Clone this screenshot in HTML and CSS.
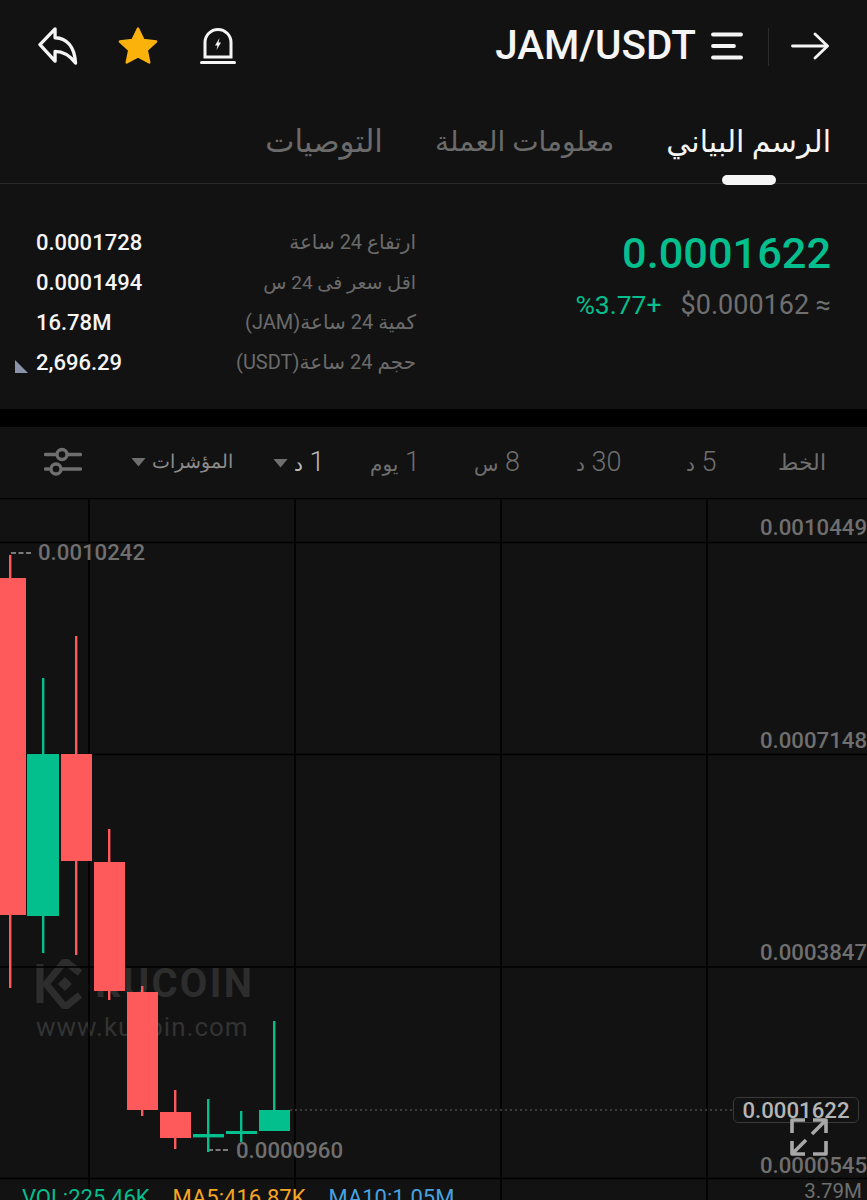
FILE: index.html
```html
<!DOCTYPE html>
<html lang="ar">
<head>
    <meta charset="UTF-8">
    <meta name="viewport" content="width=device-width, initial-scale=1.0">
    <title>JAM/USDT</title>
    <link rel="stylesheet" href="styles.css">
</head>
<body>
    <header class="top-bar">
        <div class="top-actions">
            <svg class="icon-reply" viewBox="0 0 40 40" fill="none" stroke="#f5f5f5" stroke-width="3.4" stroke-linejoin="round" stroke-linecap="round">
                <path d="M1.5 18 L17 2 L17 11 C29 11.5 37 20 38 37 C32 29 26 25 17 25 L17 35 Z"/>
            </svg>
            <svg class="icon-star" viewBox="0 0 40 40">
                <path d="M20 1.5 L25.6 13.2 L38.6 14.9 L29 23.7 L31.6 36.4 L20 30.2 L8.4 36.4 L11 23.7 L1.4 14.9 L14.4 13.2 Z" fill="#fbb20b" stroke="#fbb20b" stroke-width="2.4" stroke-linejoin="round"/>
            </svg>
            <svg class="icon-siren" viewBox="0 0 36 38" fill="none" stroke="#f5f5f5" stroke-width="3" stroke-linecap="round">
                <path d="M5 29 V14.5 A13 13 0 0 1 31 14.5 V29 Z"/>
                <path d="M1.5 34.5 H34.5"/>
                <path d="M19.5 10 L15 17.5 H17.5 L16.5 22 L21 14.5 H18.5 Z" stroke="none" fill="#f5f5f5"/>
            </svg>
        </div>
        <div class="top-pair">
            <span class="pair-name">JAM/USDT</span>
            <svg class="icon-list" viewBox="0 0 32 28" fill="none" stroke="#f5f5f5" stroke-width="3.8" stroke-linecap="round">
                <path d="M2 2.5 H30"/>
                <path d="M2 14 H23"/>
                <path d="M2 25.5 H30"/>
            </svg>
            <span class="top-divider"></span>
            <svg class="icon-arrow" viewBox="0 0 38 28" fill="none" stroke="#f5f5f5" stroke-width="2.8" stroke-linecap="round" stroke-linejoin="round">
                <path d="M1.5 14 H36"/>
                <path d="M24 2 L36.5 14 L24 26"/>
            </svg>
        </div>
    </header>

    <nav class="tabs" dir="rtl">
        <a class="tab active">الرسم البياني</a>
        <a class="tab tab-info">معلومات العملة</a>
        <a class="tab tab-recs">التوصيات</a>
    </nav>

    <section class="market">
        <div class="market-stats">
            <div class="stat-row"><span class="stat-value">0.0001728</span><span class="stat-label" dir="rtl">ارتفاع 24 ساعة</span></div>
            <div class="stat-row"><span class="stat-value">0.0001494</span><span class="stat-label tight" dir="rtl">اقل سعر فى 24 س</span></div>
            <div class="stat-row"><span class="stat-value">16.78M</span><span class="stat-label" dir="rtl">كمية 24 ساعة(JAM)</span></div>
            <div class="stat-row"><span class="stat-value">2,696.29</span><span class="stat-label" dir="rtl">حجم 24 ساعة(USDT)</span></div>
            <span class="corner-mark"></span>
        </div>
        <div class="market-price">
            <div class="price-big">0.0001622</div>
            <div class="price-sub">
                <span class="price-change">%3.77+</span>
                <span class="price-usd">$0.000162 ≈</span>
            </div>
        </div>
    </section>

    <div class="band"></div>

    <div class="periods">
        <svg class="icon-sliders" viewBox="0 0 38 30" fill="none" stroke="#6f6f6f" stroke-width="3.4" stroke-linecap="round">
            <path d="M1.5 7.5 H11"/>
            <path d="M24 7.5 H36.5"/>
            <circle cx="18" cy="7.5" r="5"/>
            <path d="M1.5 22 H5"/>
            <path d="M18 22 H36.5"/>
            <circle cx="12" cy="22" r="5"/>
        </svg>
        <div class="period-menu indicators"><span class="caret"></span><span class="period-ar">المؤشرات</span></div>
        <div class="period-menu interval"><span class="caret"></span><span class="period-on" dir="rtl">1 <span class="ar">د</span></span></div>
        <span class="period p-day" dir="rtl">1 <span class="ar">يوم</span></span>
        <span class="period p-8h" dir="rtl">8 <span class="ar">س</span></span>
        <span class="period p-30" dir="rtl">30 <span class="ar">د</span></span>
        <span class="period p-5" dir="rtl">5 <span class="ar">د</span></span>
        <span class="period p-line" dir="rtl">الخط</span>
    </div>

    <main class="chart">
        <!-- watermark sits under the candles -->
        <svg class="wm-logo" viewBox="0 0 46 50" fill="none" stroke="#2d2d2d" stroke-width="7">
            <path d="M4 5 V44"/>
            <path d="M44 14 L29 2 L10 25 L29 48 L44 36"/>
            <path d="M29 18 L36 25 L29 32 L22 25 Z" fill="#2d2d2d" stroke="none"/>
        </svg>
        <div class="wm-name">KUCOIN</div>
        <div class="wm-url">www.kucoin.com</div>

        <svg class="plot" viewBox="0 498 867 702">
            <g stroke="#000" stroke-width="1.5">
                <path d="M0 498.5 H867"/>
                <path d="M0 542.5 H867"/>
                <path d="M0 754.5 H867"/>
                <path d="M0 967 H867"/>
                <path d="M0 1178.5 H867"/>
                <path d="M89 498 V1200"/>
                <path d="M295 498 V1200"/>
                <path d="M501 498 V1200"/>
                <path d="M707 498 V1200"/>
            </g>
            <path d="M290 1110 H733" stroke="#4a4a4a" stroke-width="1.5" stroke-dasharray="2 3"/>
            <path d="M11 553 H32 M208 1150 H230" stroke="#7a7a7a" stroke-width="1.8" stroke-dasharray="5 2.5"/>
            <g fill="#fe5a5c">
                <rect x="9" y="555" width="2.4" height="433"/>
                <rect x="-1" y="578" width="27" height="337"/>
                <rect x="75" y="636" width="2.4" height="319"/>
                <rect x="61" y="754" width="31" height="107"/>
                <rect x="108" y="829" width="2.4" height="171"/>
                <rect x="94" y="862" width="31" height="129"/>
                <rect x="141" y="986" width="2.4" height="130"/>
                <rect x="127" y="992" width="31" height="118"/>
                <rect x="174" y="1090" width="2.4" height="59"/>
                <rect x="160" y="1112" width="31" height="26"/>
            </g>
            <g fill="#03bf8e">
                <rect x="42" y="678" width="2.4" height="275"/>
                <rect x="27" y="754" width="32" height="162"/>
                <rect x="207" y="1099" width="2.4" height="53"/>
                <rect x="193" y="1134" width="31" height="3.4"/>
                <rect x="240" y="1111" width="2.4" height="31"/>
                <rect x="226" y="1131" width="31" height="3"/>
                <rect x="273" y="1021" width="2.4" height="110"/>
                <rect x="259" y="1110" width="31" height="21"/>
            </g>
        </svg>

        <span class="extreme extreme-high">0.0010242</span>
        <span class="extreme extreme-low">0.0000960</span>

        <span class="axis axis-1">0.0010449</span>
        <span class="axis axis-2">0.0007148</span>
        <span class="axis axis-3">0.0003847</span>
        <span class="axis axis-4">0.0000545</span>
        <span class="axis axis-vol">3.79M</span>

        <span class="last-price">0.0001622</span>
        <svg class="icon-expand" viewBox="0 0 38 38" fill="none" stroke="#a8a8a8" stroke-width="3.6" stroke-linejoin="round">
            <path d="M15 2 H2 V15"/>
            <path d="M36 23 V36 H23"/>
            <path d="M16 22 L3 35 M2 23 V36 H15"/>
            <path d="M22 16 L35 3 M23 2 H36 V15"/>
        </svg>

        <div class="legend">
            <span class="lg-vol">VOL:225.46K</span>
            <span class="lg-ma5">MA5:416.87K</span>
            <span class="lg-ma10">MA10:1.05M</span>
        </div>
    </main>
</body>
</html>
```
FILE: styles.css
```css
* {
    margin: 0;
    padding: 0;
    box-sizing: border-box;
}

body {
    width: 867px;
    height: 1200px;
    overflow: hidden;
    background: #121212;
    color: #f5f5f5;
    font-family: Roboto, "DejaVu Sans", sans-serif;
}

.top-bar {
    height: 92px;
    display: flex;
    justify-content: space-between;
    padding: 27px 38px 0 38px;
}

.top-actions {
    display: flex;
    align-items: flex-start;
}

.icon-reply {
    width: 40px;
    height: 39px;
}

.icon-star {
    width: 40px;
    height: 39px;
    margin-left: 40px;
}

.icon-siren {
    width: 36px;
    height: 38px;
    margin-left: 42px;
    margin-top: 1px;
}

.top-pair {
    display: flex;
    align-items: flex-start;
}

.pair-name {
    font-size: 40.4px;
    font-weight: 500;
    line-height: 38px;
}

.icon-list {
    width: 32px;
    height: 28px;
    margin: 5px 0 0 15px;
}

.top-divider {
    width: 1px;
    height: 38px;
    margin: 1px 0 0 25px;
    background: #2c2c2c;
}

.icon-arrow {
    width: 38px;
    height: 28px;
    margin: 5px 0 0 22px;
}

.tabs {
    height: 92px;
    display: flex;
    gap: 52px;
    padding-right: 36px;
    border-bottom: 1px solid #2b2b2b;
}

.tab {
    position: relative;
    font-size: 30px;
    line-height: 36px;
    padding-top: 32px;
    color: #6b6b6b;
}

.tab-info {
    font-size: 28px;
}

.tab-recs {
    font-size: 31px;
}

.tab.active {
    color: #f5f5f5;
}

.tab.active::after {
    content: "";
    position: absolute;
    left: 56px;
    bottom: -2px;
    width: 54px;
    height: 10px;
    border-radius: 5px;
    background: #f5f5f5;
}

.market {
    height: 225px;
    display: flex;
    justify-content: space-between;
    padding: 38px 36px 0;
}

.market-stats {
    position: relative;
    width: 380px;
    display: flex;
    flex-direction: column;
}

.stat-row {
    height: 40px;
    display: flex;
    justify-content: space-between;
    align-items: center;
}

.stat-value {
    font-size: 22px;
    font-weight: 500;
}

.stat-label {
    font-size: 20px;
    color: #6b6b6b;
}

.stat-label.tight {
    font-size: 19px;
}

.corner-mark {
    position: absolute;
    left: -21px;
    top: 138px;
    width: 13px;
    height: 13px;
    background: #8b93ab;
    clip-path: polygon(0 0, 100% 100%, 0 100%);
}

.market-price {
    text-align: right;
}

.price-big {
    font-size: 43.3px;
    font-weight: 500;
    line-height: 50px;
    margin-top: 7px;
    color: #03bf8e;
}

.price-sub {
    display: flex;
    justify-content: flex-end;
    gap: 19px;
    margin-top: 11px;
    font-size: 27px;
    line-height: 30px;
}

.price-change {
    font-size: 26.5px;
    color: #03bf8e;
}

.price-usd {
    color: #6f6f6f;
}

.band {
    height: 18px;
    background: #000;
}

.periods {
    position: relative;
    height: 71px;
    color: #6f6f6f;
    font-size: 27px;
    font-weight: 300;
}

.icon-sliders {
    position: absolute;
    left: 44px;
    top: 20px;
    width: 38px;
    height: 30px;
}

.period,
.period-menu {
    position: absolute;
    top: 17px;
    line-height: 36px;
    white-space: nowrap;
}

.period-menu {
    display: flex;
    align-items: center;
    gap: 6px;
}

.ar {
    font-size: 20px;
    font-weight: 400;
}

.indicators {
    left: 131px;
}

.period-ar {
    font-size: 19px;
    color: #8c8c8c;
}

.interval {
    left: 273px;
}

.period-on {
    color: #bdbdbd;
}

.caret {
    width: 15px;
    height: 9px;
    background: #6f6f6f;
    clip-path: polygon(0 0, 100% 0, 50% 100%);
}

.p-day { left: 370px; }
.p-8h { left: 474px; }
.p-30 { left: 576px; }
.p-5 { left: 686px; }
.p-line { left: 778px; font-size: 22.4px; }

.chart {
    position: relative;
    height: 702px;
    overflow: hidden;
}

.plot {
    position: absolute;
    left: 0;
    top: 0;
    width: 867px;
    height: 702px;
}

.wm-logo {
    position: absolute;
    left: 36px;
    top: 461px;
    width: 46px;
    height: 50px;
}

.wm-name {
    position: absolute;
    left: 95px;
    top: 463px;
    font-size: 40px;
    font-weight: 700;
    letter-spacing: 2.3px;
    line-height: 46px;
    color: #2d2d2d;
}

.wm-url {
    position: absolute;
    left: 36px;
    top: 514px;
    font-size: 26px;
    line-height: 30px;
    letter-spacing: 1px;
    color: #333;
}

.extreme,
.axis {
    position: absolute;
    font-size: 22.2px;
    font-weight: 500;
    line-height: 26px;
    color: #6f6f6f;
}

.extreme-high { left: 38px; top: 41px; }
.extreme-low { left: 236px; top: 639px; }

.axis {
    right: 0;
}

.axis-1 { top: 16px; }
.axis-2 { top: 229px; }
.axis-3 { top: 441px; }
.axis-4 { top: 654px; }
.axis-vol { top: 680px; right: 5px; font-size: 20.5px; font-weight: 400; }

.last-price {
    position: absolute;
    left: 733px;
    top: 599px;
    width: 126px;
    height: 26px;
    border: 1px solid #3a3a3a;
    border-radius: 5px;
    background: #121212;
    font-size: 22.2px;
    font-weight: 500;
    line-height: 25px;
    text-align: center;
    color: #b5b5b5;
}

.icon-expand {
    position: absolute;
    left: 790px;
    top: 620px;
    width: 38px;
    height: 38px;
}

.legend {
    position: absolute;
    left: 22px;
    top: 688px;
    display: flex;
    gap: 23px;
    font-size: 22px;
    line-height: 24px;
    white-space: nowrap;
}

.lg-vol { color: #03bf8e; }
.lg-ma5 { color: #f5a623; }
.lg-ma10 { color: #46a3e0; }
```
